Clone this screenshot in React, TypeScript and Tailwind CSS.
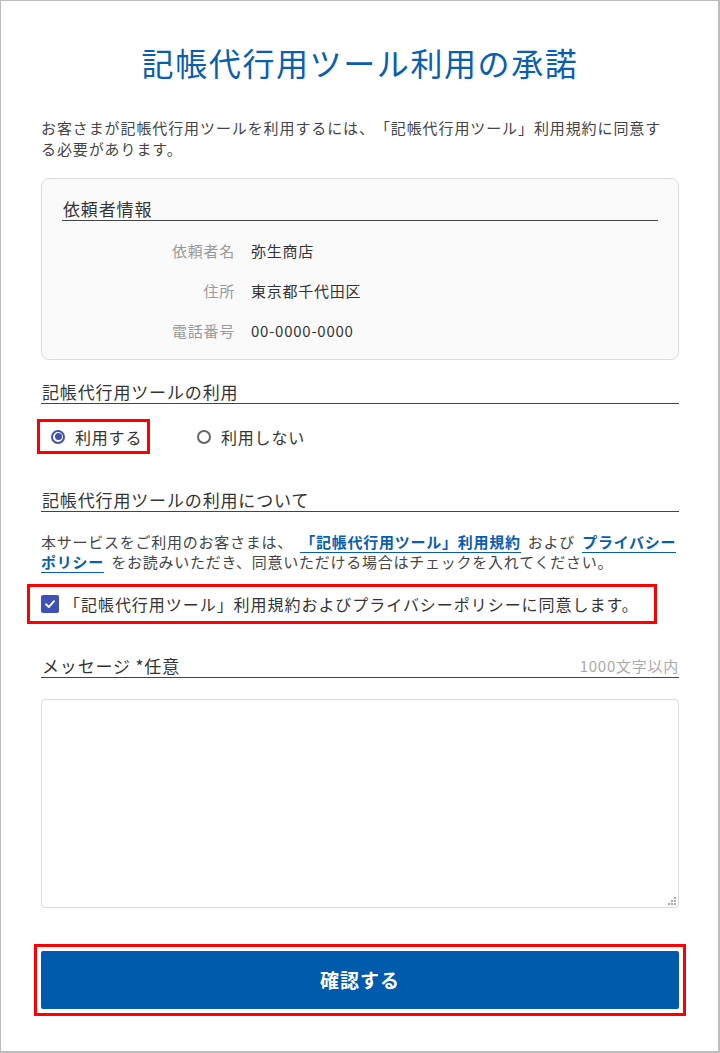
import React from "react";

const font = { fontFamily: '"Noto Sans CJK JP", "Noto Sans", sans-serif' };

function SectionHeading({ children, right }: { children: React.ReactNode; right?: React.ReactNode }) {
  return (
    <div className="flex items-end justify-between border-b border-[#444] text-[17px] leading-[22px] tracking-[0.05em] text-[#333]">
      <span className="pl-[1px]">{children}</span>
      {right}
    </div>
  );
}

function Row({ label, value }: { label: string; value: string }) {
  return (
    <div className="flex h-[40px] items-center">
      <div className="w-[173px] text-right text-[15px] tracking-[0.05em] text-[#999]">{label}</div>
      <div className="ml-[16px] text-[15px] tracking-[0.05em] text-[#333]">{value}</div>
    </div>
  );
}

function ResizeDots() {
  return (
    <svg width="9" height="9" viewBox="0 0 9 9" className="absolute bottom-[3px] right-[3px]">
      <rect x="7" y="1" width="2" height="2" fill="#aaa" />
      <rect x="4" y="4" width="2" height="2" fill="#aaa" />
      <rect x="7" y="4" width="2" height="2" fill="#aaa" />
      <rect x="1" y="7" width="2" height="2" fill="#aaa" />
      <rect x="4" y="7" width="2" height="2" fill="#aaa" />
      <rect x="7" y="7" width="2" height="2" fill="#aaa" />
    </svg>
  );
}

export default function App() {
  return (
    <div
      style={font}
      className="box-border h-[1053px] w-[720px] overflow-hidden border-t border-l border-r-2 border-b-2 border-[#bdbdbd] bg-white pl-[40px] pr-[39px] pt-[41px] [text-spacing-trim:space-all]"
    >
      <h1 className="text-center text-[32px] leading-[40px] tracking-[0.05em] text-[#0a5eb0]">
        記帳代行用ツール利用の承諾
      </h1>

      <p className="mt-[35px] pr-[6px] text-[15px] leading-[21px] tracking-[0.06em] text-[#444]">
        お客さまが記帳代行用ツールを利用するには、「記帳代行用ツール」利用規約に同意する必要があります。
      </p>

      <div className="mt-[19px] rounded-[8px] border border-[#dcdcdc] bg-[#fafafa] px-[20px] pb-[8px] pt-[19px]">
        <div className="border-b border-[#444] text-[17px] leading-[22px] tracking-[0.05em] text-[#333]">
          <span className="pl-[1px]">依頼者情報</span>
        </div>
        <div className="mt-[10px]">
          <Row label="依頼者名" value="弥生商店" />
          <Row label="住所" value="東京都千代田区" />
          <Row label="電話番号" value="00-0000-0000" />
        </div>
      </div>

      <div className="mt-[21px]">
        <SectionHeading>記帳代行用ツールの利用</SectionHeading>
      </div>

      <div className="mt-[15px] flex items-center">
        <div className="-ml-[4px] flex h-[35px] w-[113px] items-center border-[3px] border-[#ff0000] pl-[11px]">
          <span className="flex h-[14px] w-[14px] items-center justify-center rounded-full border-2 border-[#3f51b5]">
            <span className="h-[7px] w-[7px] rounded-full bg-[#3f51b5]" />
          </span>
          <span className="ml-[10px] text-[16px] tracking-[0.05em] text-[#333]">利用する</span>
        </div>
        <div className="ml-[47px] flex items-center">
          <span className="h-[14px] w-[14px] rounded-full border-2 border-[#666]" />
          <span className="ml-[10px] text-[16px] tracking-[0.05em] text-[#333]">利用しない</span>
        </div>
      </div>

      <div className="mt-[35px]">
        <SectionHeading>記帳代行用ツールの利用について</SectionHeading>
      </div>

      <p className="mt-[20px] text-[15px] leading-[20px] tracking-[0.05em] text-[#444]">
        本サービスをご利用のお客さまは、{" "}
        <span className="mx-[3px] border-b border-[#0a5eb0] font-bold text-[#0a5eb0]">「記帳代行用ツール」利用規約</span>{" "}
        および{" "}
        <span className="mx-[3px] border-b border-[#0a5eb0] font-bold text-[#0a5eb0]">プライバシーポリシー</span>{" "}
        をお読みいただき、同意いただける場合はチェックを入れてください。
      </p>

      <div className="-ml-[14px] mt-[12px] flex h-[40px] w-[630px] items-center border-[3px] border-[#ff0000] pl-[11px]">
        <span className="flex h-[18px] w-[18px] shrink-0 items-center justify-center rounded-[2px] bg-[#3f51b5]">
          <svg width="12" height="12" viewBox="0 0 12 12" fill="none">
            <path d="M2 6.3 L4.8 9 L10 3.2" stroke="white" strokeWidth="1.9" strokeLinecap="round" strokeLinejoin="round" />
          </svg>
        </span>
        <span className="ml-[5px] whitespace-nowrap text-[16px] tracking-[0.06em] text-[#333]">
          「記帳代行用ツール」利用規約およびプライバシーポリシーに同意します。
        </span>
      </div>

      <div className="mt-[31px]">
        <SectionHeading
          right={<span className="text-[15px] leading-[22px] tracking-[0.05em] text-[#aaa]">1000文字以内</span>}
        >
          メッセージ *任意
        </SectionHeading>
      </div>

      <div className="relative mt-[21px]">
        <textarea
          className="block h-[209px] w-full resize-none rounded-[4px] border border-[#dcdcdc] bg-white"
          style={font}
        />
        <ResizeDots />
      </div>

      <div className="-mx-[7px] mt-[36px] border-[3px] border-[#ff0000] p-[4px]">
        <button className="flex h-[58px] w-full items-center justify-center rounded-[2px] bg-[#005bac] text-[19px] font-bold tracking-[0.05em] text-white">
          確認する
        </button>
      </div>
    </div>
  );
}
